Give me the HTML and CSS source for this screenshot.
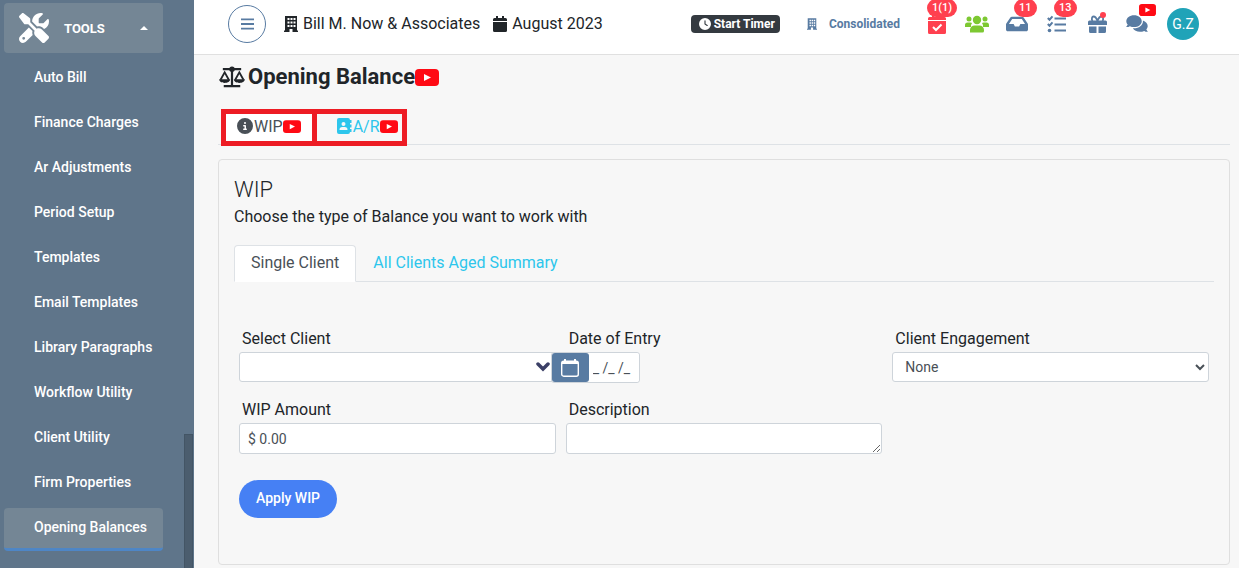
FILE: index.html
```html
<!DOCTYPE html>
<html lang="en">
<head>
  <meta charset="utf-8">
  <title>Opening Balance</title>
  <meta name="viewport" content="width=device-width, initial-scale=1">
  <link rel="stylesheet" href="styles.css">
</head>
<body>
  <!-- Shared icons -->
  <svg class="sprite" aria-hidden="true">
    <symbol id="youtube" viewBox="0 0 24 17">
      <rect width="24" height="17" rx="4" fill="#ff0a14"/>
      <path d="M9 5l7 3.500L9 12z" fill="#fff"/>
    </symbol>
    <symbol id="building" viewBox="0 0 14 16">
      <path fill-rule="evenodd" d="M1 0h12v14.500h1V16H8.500v-3h-3v3H0v-1.500h1zM3.500 2v2h2V2zM6.500 2v2h2V2zM9.500 2v2h2V2zM3.500 5.500v2h2v-2zM6.500 5.500v2h2v-2zM9.500 5.500v2h2v-2zM3.500 9v2h2V9zM6.500 9v2h2V9zM9.500 9v2h2V9z"/>
    </symbol>
  </svg>

  <div class="layout">
    <aside class="sidebar">
      <button type="button" class="menu-header">
        <svg class="tools-icon" viewBox="0 0 512 512"><path d="M78.600 5C69.100-2.400 55.600-1.500 47 7L7 47c-8.500 8.500-9.400 22-2.100 31.600l80 104c4.500 5.900 11.600 9.400 19 9.400h54.100l109 109c-14.700 29-10 65.400 14.300 89.600l112 112c12.500 12.500 32.800 12.500 45.300 0l64-64c12.500-12.500 12.500-32.800 0-45.300l-112-112c-24.200-24.200-60.600-29-89.600-14.300l-109-109V104c0-7.500-3.500-14.500-9.400-19L78.600 5zM19.900 396.100C7.200 408.800 0 426.100 0 444.100C0 481.600 30.400 512 67.900 512c18 0 35.300-7.200 48-19.900L233.700 374.300c-7.800-20.900-9-43.600-3.600-65.100l-61.700-61.700L19.900 396.100zM512 144c0-10.500-1.100-20.700-3.200-30.500c-2.400-11.200-16.100-14.100-24.200-6l-63.900 63.900c-3 3-7.100 4.700-11.300 4.700H352c-8.800 0-16-7.200-16-16V102.600c0-4.200 1.700-8.300 4.700-11.300l63.900-63.900c8.100-8.100 5.200-21.800-6-24.200C388.700 1.100 378.500 0 368 0C288.500 0 224 64.500 224 144l0 .8 85.300 85.300c36-9.100 75.800 .5 104 28.700L429 274.500c49-23 83-72.800 83-130.500zM56 432a24 24 0 1 1 48 0 24 24 0 1 1 -48 0z"/></svg>
        <span>TOOLS</span>
        <svg class="caret" viewBox="0 0 8 4"><path d="M0 4l4-4 4 4z"/></svg>
      </button>
      <nav class="menu">
        <a href="#">Auto Bill</a>
        <a href="#">Finance Charges</a>
        <a href="#">Ar Adjustments</a>
        <a href="#">Period Setup</a>
        <a href="#">Templates</a>
        <a href="#">Email Templates</a>
        <a href="#">Library Paragraphs</a>
        <a href="#">Workflow Utility</a>
        <a href="#">Client Utility</a>
        <a href="#">Firm Properties</a>
        <a href="#" class="active">Opening Balances</a>
      </nav>
      <div class="scroll-thumb"></div>
    </aside>

    <div class="page">
      <header class="topbar">
        <button type="button" class="toggle" aria-label="Toggle menu">
          <svg viewBox="0 0 14 12"><path d="M0 1h14M0 6h14M0 11h14" stroke="currentColor" stroke-width="2"/></svg>
        </button>
        <div class="firm">
          <svg class="icon-firm"><use href="#building"/></svg>
          <span>Bill M. Now &amp; Associates</span>
        </div>
        <div class="firm">
          <svg class="icon-firm" viewBox="0 0 14 16"><path d="M3 0h2v2h4V0h2v2h1.500A1.500 1.500 0 0 1 14 3.500V5H0V3.500A1.500 1.500 0 0 1 1.500 2H3zM0 6h14v8.500a1.500 1.500 0 0 1-1.500 1.500h-11A1.500 1.500 0 0 1 0 14.500z"/></svg>
          <span>August 2023</span>
        </div>

        <button type="button" class="timer">
          <svg viewBox="0 0 512 512"><path d="M256 0a256 256 0 1 1 0 512A256 256 0 1 1 256 0zM232 120V256c0 8 4 15.500 10.700 20l96 64c11 7.400 25.900 4.400 33.300-6.700s4.400-25.900-6.700-33.300L280 243.200V120c0-13.300-10.700-24-24-24s-24 10.700-24 24z"/></svg>
          Start Timer
        </button>
        <a href="#" class="consolidated">
          <svg><use href="#building"/></svg>
          Consolidated
        </a>

        <div class="actions">
          <button type="button" class="action red" aria-label="Due tasks">
            <svg width="18" height="20" viewBox="0 0 18 20"><path fill-rule="evenodd" d="M4 0h2.500v3h5V0H14v3h2.500A1.500 1.500 0 0 1 18 4.500V6H0V4.500A1.500 1.500 0 0 1 1.500 3H4zM0 7h18v11.500a1.500 1.500 0 0 1-1.500 1.500h-15A1.500 1.500 0 0 1 0 18.500z"/><path d="M5 13l3 3 5.500-5.500" fill="none" stroke="#fff" stroke-width="2"/></svg>
            <span class="badge badge-wide">1(1)</span>
          </button>
          <button type="button" class="action green" aria-label="Team">
            <svg width="24" height="18" viewBox="0 0 24 18"><circle cx="4" cy="4" r="2.500"/><circle cx="20" cy="4" r="2.500"/><circle cx="12" cy="5" r="4.200"/><path d="M0 12V10a2.500 2.500 0 0 1 2.500-2.500h3a3 3 0 0 1 1.500.5A5 5 0 0 0 6 12zM24 12V10a2.500 2.500 0 0 0-2.500-2.500h-3a3 3 0 0 0-1.500.5A5 5 0 0 1 18 12zM5 17.500V15a4.500 4.500 0 0 1 4.500-4.500h5A4.500 4.500 0 0 1 19 15v1a1.500 1.500 0 0 1-1.500 1.500z"/></svg>
          </button>
          <button type="button" class="action" aria-label="Inbox">
            <svg width="22" height="20" viewBox="0 0 576 512"><path d="M567.938 243.908L462.250 85.374A48.003 48.003 0 0 0 422.311 64H153.689a48 48 0 0 0-39.938 21.374L8.062 243.908A47.994 47.994 0 0 0 0 270.533V400c0 26.510 21.490 48 48 48h480c26.510 0 48-21.490 48-48V270.533a47.994 47.994 0 0 0-8.062-26.625zM162.252 128h251.497l85.333 128H376l-32 64H232l-32-64H76.918l85.334-128z"/></svg>
            <span class="badge">11</span>
          </button>
          <button type="button" class="action" aria-label="Task list">
            <svg width="20" height="18" viewBox="0 0 20 18"><path d="M7.500 3.500H19M7.500 9.500H19M7.500 15.500H19M.8 3l1.700 1.700L5.500 1.300M.8 9l1.700 1.700 3-3.400" fill="none" stroke="currentColor" stroke-width="2"/><circle cx="2.500" cy="15.500" r="1.800"/></svg>
            <span class="badge">13</span>
          </button>
          <button type="button" class="action" aria-label="Rewards">
            <svg width="19" height="18" viewBox="0 0 19 18"><path d="M1.500 5.500h16A1.500 1.500 0 0 1 19 7v3H0V7a1.500 1.500 0 0 1 1.500-1.500zM1 11.500h7.500V18h-6A1.500 1.500 0 0 1 1 16.500zM10.500 11.500H18v5a1.500 1.500 0 0 1-1.500 1.500h-6z"/><path d="M9.500 6C8.500 3 7 1.500 5.500 1.500S3.200 4 4.500 6M9.500 6c1-3 2.500-4.500 4-4.500S15.800 4 14.500 6" fill="none" stroke="currentColor" stroke-width="1.800"/></svg>
            <span class="dot"></span>
          </button>
          <button type="button" class="action" aria-label="Chat">
            <svg width="22" height="19" viewBox="0 0 576 512"><path d="M416 192c0-88.400-93.100-160-208-160S0 103.600 0 192c0 34.300 14.100 65.900 38 92-13.400 30.200-35.500 54.200-35.800 54.500-2.200 2.300-2.800 5.700-1.500 8.700S4.800 352 8 352c36.600 0 66.900-12.300 88.700-25 32.200 15.700 70.300 25 111.300 25 114.900 0 208-71.600 208-160zm122 220c23.900-26 38-57.700 38-92 0-66.900-53.500-124.200-129.300-148.100.9 6.600 1.300 13.300 1.300 20.100 0 105.900-107.700 192-240 192-10.800 0-21.300-.8-31.700-1.900C207.800 439.600 281.800 480 368 480c41 0 79.100-9.200 111.300-25 21.800 12.700 52.100 25 88.700 25 3.200 0 6.100-1.900 7.300-4.800 1.300-2.900.7-6.300-1.500-8.700-.3-.3-22.400-24.200-35.800-54.500z"/></svg>
            <svg class="video-badge"><use href="#youtube"/></svg>
          </button>
        </div>
        <button type="button" class="avatar">G.Z</button>
      </header>

      <main class="content">
        <h1 class="title">
          <svg class="scale" viewBox="0 0 28 24"><path d="M4 3.500h20M5 22h18M14 3v19" stroke="currentColor" stroke-width="2.400" fill="none"/><circle cx="14" cy="3.500" r="3"/><path d="M1.500 15L6 7l4.500 8M17.500 15L22 7l4.500 8" fill="none" stroke="currentColor" stroke-width="2"/><path d="M0 14.500h12c0 2.300-2.500 4-6 4s-6-1.700-6-4zM16 14.500h12c0 2.300-2.500 4-6 4s-6-1.700-6-4z"/></svg>
          <span>Opening Balance</span>
          <svg class="video-title"><use href="#youtube"/></svg>
        </h1>

        <div class="type-tabs">
          <button type="button" class="active">
            <svg width="16" height="16" viewBox="0 0 512 512"><path d="M256 512A256 256 0 1 0 256 0a256 256 0 1 0 0 512zM216 336h24V272H216c-13.300 0-24-10.700-24-24s10.700-24 24-24h48c13.300 0 24 10.700 24 24v88h8c13.300 0 24 10.700 24 24s-10.700 24-24 24H216c-13.300 0-24-10.700-24-24s10.700-24 24-24zm40-208a32 32 0 1 1 0 64 32 32 0 1 1 0-64z"/></svg>
            <span>WIP</span>
            <svg class="video-tab"><use href="#youtube"/></svg>
          </button>
          <button type="button">
            <svg width="16" height="16" viewBox="0 0 16 16"><path fill-rule="evenodd" d="M3 0h9a2 2 0 0 1 2 2v12a2 2 0 0 1-2 2H3a2 2 0 0 1-2-2V2a2 2 0 0 1 2-2zM7.500 4a2 2 0 1 0 0 4 2 2 0 0 0 0-4zM6.200 9a2.700 2.700 0 0 0-2.700 2.700c0 .2.200.3.500.3h7c.3 0 .5-.1.500-.3A2.700 2.700 0 0 0 8.800 9z"/><path d="M14 2h1.500v3H14zM14 6.500h1.500v3H14zM14 11h1.500v3H14z"/></svg>
            <span>A/R</span>
            <svg class="video-tab"><use href="#youtube"/></svg>
          </button>
        </div>

        <section class="card">
          <h2>WIP</h2>
          <p>Choose the type of Balance you want to work with</p>

          <div class="tabs">
            <button type="button" class="active">Single Client</button>
            <button type="button">All Clients Aged Summary</button>
          </div>

          <form class="wip-form">
            <div class="field">
              <label for="client">Select Client</label>
              <div class="client-select">
                <select id="client"><option></option></select>
                <svg viewBox="0 0 14 10"><path d="M2 2l5 5 5-5" fill="none" stroke="currentColor" stroke-width="3.500" stroke-linecap="round"/></svg>
              </div>
            </div>
            <div class="field">
              <label for="entryDate">Date of Entry</label>
              <div class="date-group">
                <button type="button" aria-label="Open calendar">
                  <svg viewBox="0 0 18 18"><rect x=".7" y="2.200" width="16.600" height="15" rx="2" fill="none" stroke="currentColor" stroke-width="1.400"/><path d="M1 2h16v3H1zM3 0h2v3H3zM13 0h2v3h-2z"/></svg>
                </button>
                <input type="text" id="entryDate" value="_ /_ /_">
              </div>
            </div>
            <div class="field">
              <label for="engagement">Client Engagement</label>
              <select id="engagement"><option>None</option></select>
            </div>
            <div class="field">
              <label for="amount">WIP Amount</label>
              <input type="text" id="amount" value="$ 0.00">
            </div>
            <div class="field">
              <label for="description">Description</label>
              <textarea id="description" rows="1"></textarea>
            </div>
            <button type="submit" class="apply">Apply WIP</button>
          </form>
        </section>
      </main>
    </div>
  </div>
</body>
</html>
```
FILE: styles.css
```css
* {
  box-sizing: border-box;
}
body {
  margin: 0;
  font-family: Roboto, "Liberation Sans", sans-serif;
  font-size: 16px;
  line-height: 24px;
  color: #212529;
  background: #f7f7f7;
}
button, input, select, textarea {
  font-family: inherit;
  margin: 0;
}
button {
  border: none;
  background: none;
  padding: 0;
  cursor: pointer;
}
svg {
  display: block;
  flex: none;
  fill: currentColor;
}
.sprite {
  position: absolute;
  width: 0;
  height: 0;
}
.layout {
  display: flex;
  height: 100vh;
  overflow: hidden;
}

/* Sidebar */
.sidebar {
  position: relative;
  flex: none;
  width: 194px;
  padding: 3px 31px 0 4px;
  background: #5f758a;
  color: #fff;
  overflow: hidden;
}
.menu-header {
  display: flex;
  align-items: center;
  width: 100%;
  height: 50px;
  padding: 0 15px;
  border-radius: 4px;
  background: #748695;
  color: #fff;
  font-size: 13px;
  font-weight: 700;
}
.tools-icon {
  width: 30px;
  height: 30px;
  margin-right: 15px;
}
.caret {
  width: 8px;
  height: 4px;
  margin-left: auto;
}
.menu {
  display: flex;
  flex-direction: column;
  gap: 2px;
  margin-top: 5px;
}
.menu a {
  height: 43px;
  padding-left: 30px;
  border-radius: 4px;
  color: #fff;
  font-size: 14px;
  font-weight: 500;
  line-height: 39px;
  text-decoration: none;
}
.menu a.active {
  background: #748695;
  border-bottom: 3px solid #4e86c6;
}
.scroll-thumb {
  position: absolute;
  right: 1px;
  top: 434px;
  bottom: 0;
  width: 9px;
  background: #4b5d6e;
  border: 1px solid #435565;
  border-bottom: none;
}

/* Top bar */
.page {
  flex: 1;
  min-width: 0;
}
.topbar {
  display: flex;
  align-items: center;
  height: 55px;
  padding: 0 40px 7px 34px;
  background: #fff;
  border-bottom: 1px solid #e0e0e0;
}
.toggle {
  display: flex;
  align-items: center;
  justify-content: center;
  width: 38px;
  height: 38px;
  margin-right: 18px;
  border: 1px solid #587ba2;
  border-radius: 50%;
  color: #587ba2;
}
.toggle svg {
  width: 13px;
  height: 12px;
}
.firm {
  display: flex;
  align-items: center;
  gap: 5px;
  margin-right: 13px;
}
.icon-firm {
  width: 14px;
  height: 16px;
}
.timer {
  display: flex;
  align-items: center;
  gap: 3px;
  height: 18px;
  margin-left: auto;
  padding: 0 5px 0 8px;
  border-radius: 4px;
  background: #343a40;
  color: #fff;
  font-size: 12px;
  font-weight: 700;
}
.timer svg {
  width: 12px;
  height: 12px;
}
.consolidated {
  display: flex;
  align-items: center;
  gap: 12px;
  margin: 0 17px 0 27px;
  color: #587ba2;
  font-size: 12px;
  font-weight: 700;
  text-decoration: none;
}
.consolidated svg {
  width: 10px;
  height: 12px;
}
.actions {
  display: flex;
  margin-right: 10px;
}
.action {
  position: relative;
  display: flex;
  align-items: center;
  justify-content: center;
  width: 40px;
  height: 38px;
  color: #587ba2;
}
.action.red {
  color: #ff404f;
}
.action.green {
  color: #7dc832;
}
.badge {
  position: absolute;
  top: -6px;
  left: 17px;
  height: 18px;
  padding: 0 5px;
  border-radius: 9px;
  background: #ff404f;
  color: #fff;
  font-size: 11px;
  font-weight: 500;
  line-height: 18px;
}
.badge-wide {
  left: 10px;
}
.dot {
  position: absolute;
  top: 7px;
  left: 23px;
  width: 6px;
  height: 6px;
  border-radius: 50%;
  background: #ff404f;
}
.video-badge {
  position: absolute;
  top: -1px;
  left: 22px;
  width: 17px;
  height: 12px;
}
.avatar {
  width: 32px;
  height: 32px;
  border-radius: 50%;
  background: #20a3b8;
  color: #fff;
  font-size: 14px;
}

/* Content */
.content {
  padding: 9px 9px 3px 24px;
}
.title {
  display: flex;
  align-items: center;
  margin: 0;
  font-size: 22px;
  font-weight: 700;
  line-height: 26px;
}
.scale {
  width: 28px;
  height: 22px;
  margin-right: 2px;
}
.video-title {
  width: 24px;
  height: 17px;
}
.type-tabs {
  display: flex;
  margin-top: 19px;
  padding-left: 3px;
  border-bottom: 1px solid #dee2e6;
}
.type-tabs button {
  display: flex;
  align-items: center;
  height: 37px;
  margin-bottom: -2px;
  padding: 0 11px 3px;
  border: 5px solid #ed1c24;
  color: #2dc6ec;
  font-size: 16px;
}
.type-tabs button + button {
  margin-left: -5px;
  padding-left: 19px;
  padding-right: 4px;
}
.type-tabs .active {
  background: #fff;
  color: #495057;
}
.type-tabs span {
  margin-left: 1px;
}
.video-tab {
  width: 18px;
  height: 13px;
}
.card {
  margin-top: 14px;
  padding: 16px 15px 46px;
  border: 1px solid #dfdfdf;
  border-radius: 4px;
}
.card h2 {
  margin: 0;
  font-size: 22px;
  font-weight: 300;
  line-height: 28px;
}
.card p {
  margin: 0 0 15px;
  line-height: 26px;
}
.tabs {
  display: flex;
  border-bottom: 1px solid #dee2e6;
}
.tabs button {
  height: 37px;
  margin-bottom: -1px;
  padding: 0 16px 2px;
  border: 1px solid transparent;
  border-radius: 4px 4px 0 0;
  color: #2dc6ec;
  font-size: 16px;
}
.tabs .active {
  background: #fff;
  border-color: #dee2e6 #dee2e6 #fff;
  color: #495057;
}

/* WIP form */
.wip-form {
  display: grid;
  grid-template-columns: repeat(3, 1fr);
  gap: 15px 10px;
  padding: 45px 5px 0;
}
.field label {
  display: block;
  margin-bottom: 1px;
  padding-left: 3px;
}
.field select, .field input, .field textarea {
  display: block;
  width: 100%;
  height: 31px;
  border: 1px solid #ced4da;
  border-radius: 3px;
  background: #fff;
  color: #495057;
  font-size: 14px;
}
.field select {
  height: 30px;
}
.field input {
  padding: 0 8px;
}
.field textarea {
  padding: 4px 8px;
}
#engagement {
  padding-left: 8px;
}
.client-select {
  position: relative;
}
.client-select select {
  appearance: none;
}
.client-select svg {
  position: absolute;
  top: 10px;
  right: 6px;
  width: 14px;
  height: 10px;
  color: #3b3f66;
}
/* sits against the client drop-down */
.date-group {
  position: relative;
  display: flex;
  width: 89px;
  margin-left: -15px;
  border: 1px solid #ced4da;
  border-radius: 3px;
  background: #fff;
}
.date-group button {
  display: flex;
  align-items: center;
  justify-content: center;
  flex: none;
  width: 37px;
  height: 29px;
  border-radius: 3px;
  background: #587ba2;
  color: #fff;
}
.date-group svg {
  width: 18px;
  height: 18px;
}
.date-group input {
  height: 29px;
  min-width: 0;
  padding: 0 4px;
  border: none;
}
.apply {
  grid-column: 1 / -1;
  justify-self: start;
  height: 38px;
  margin-top: 11px;
  padding: 0 17px 2px;
  border-radius: 19px;
  background: #4680f4;
  color: #fff;
  font-size: 14px;
  font-weight: 500;
}
```
